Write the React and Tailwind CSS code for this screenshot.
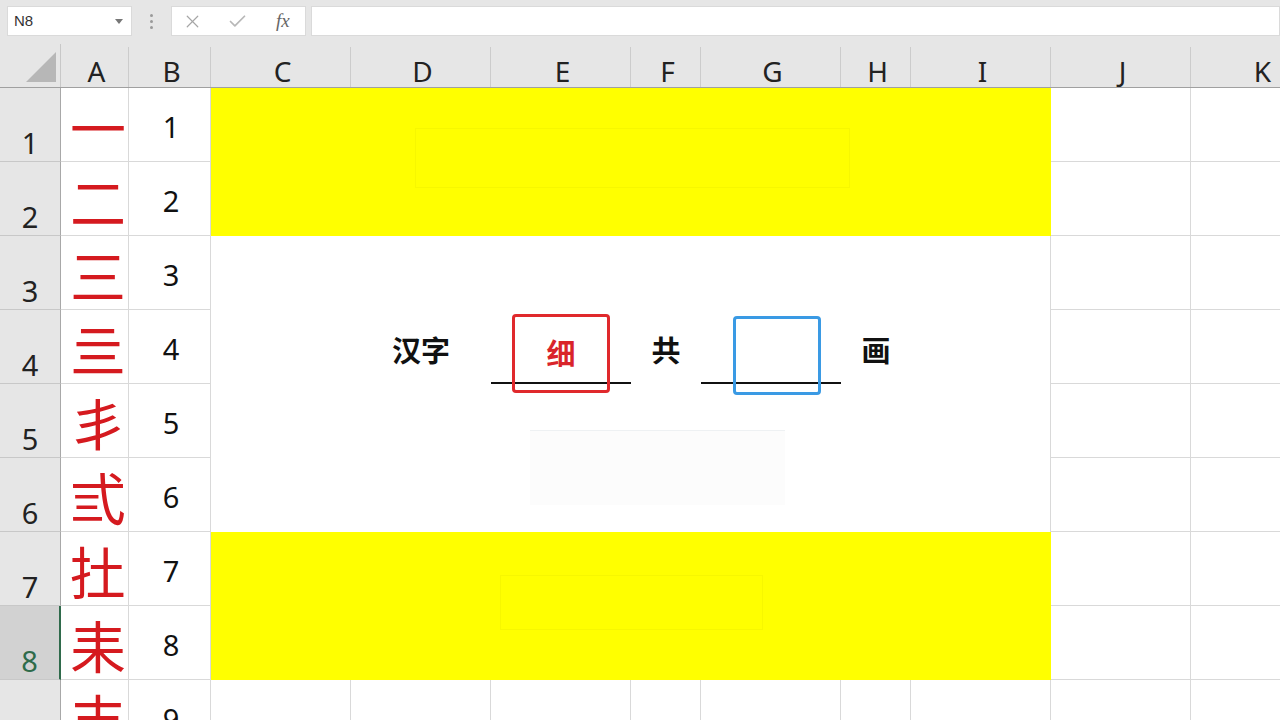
import { X, Check } from "lucide-react";

const cols = ["A", "B", "C", "D", "E", "F", "G", "H", "I", "J", "K"];
const numerals = ["一", "二", "三", "亖", "丯", "弎", "扗", "耒", "丰"];
const grid = "grid grid-cols-[61px_68px_82px_140px_140px_140px_70px_140px_70px_140px_140px_140px]";
const cjk = { fontFamily: '"Noto Sans CJK SC", "Noto Sans", sans-serif' };

function Toolbar() {
    return (
        <div className="h-[44px] bg-[#e6e6e6] flex items-start pt-[6px] pl-[7px] gap-0">
            <div className="w-[125px] h-[30px] bg-white flex items-center justify-between px-[6px] border border-[#dadada]">
                <span className="text-[15px] text-[#333]" style={{ fontFamily: '"Liberation Sans", sans-serif' }}>
                    N8
                </span>
                <span className="w-0 h-0 border-l-[4px] border-r-[4px] border-t-[5px] border-l-transparent border-r-transparent border-t-[#777] mr-[2px]" />
            </div>
            <div className="w-[39px] h-[30px] flex flex-col items-center justify-center gap-[3px]">
                <span className="w-[3px] h-[3px] rounded-full bg-[#9a9a9a]" />
                <span className="w-[3px] h-[3px] rounded-full bg-[#9a9a9a]" />
                <span className="w-[3px] h-[3px] rounded-full bg-[#9a9a9a]" />
            </div>
            <div className="w-[135px] h-[30px] bg-white border border-[#dadada] flex items-center pl-[10px]">
                <X size={21} strokeWidth={1.4} className="text-[#a6a6a6]" />
                <Check size={21} strokeWidth={2} className="text-[#b8b8b8] ml-[24px]" />
                <span className="text-[19px] italic text-[#666] ml-[28px]" style={{ fontFamily: '"Liberation Serif", serif' }}>
                    fx
                </span>
            </div>
            <div className="ml-[5px] flex-1 h-[30px] bg-white border border-[#dadada]" />
        </div>
    );
}

function HeaderRow() {
    return (
        <div className={`${grid} h-[44px] bg-[#e6e6e6] border-b border-[#a0a0a0]`}>
            <div className="flex items-end justify-end pr-[3px] pb-[4px] border-r border-[#c8c8c8]">
                <svg width="32" height="32" viewBox="0 0 32 32">
                    <polygon points="1,31 31,31 31,1" fill="#b7b7b7" />
                </svg>
            </div>
            {cols.map((c) => (
                <div key={c} className="flex items-end justify-center">
                    <div className="flex-1 flex items-center justify-center h-[40px] pt-[7px] pl-[4px] leading-none border-r border-[#cccccc] text-[28px] text-[#222]" style={{ fontFamily: '"Noto Sans", sans-serif' }}>
                        {c}
                    </div>
                </div>
            ))}
        </div>
    );
}

function Body() {
    return (
        <div className={`${grid} grid-rows-[repeat(9,74px)]`}>
            {numerals.map((ch, i) => {
                const r = i + 1;
                const sel = r === 8;
                return [
                    <div
                        key={`h${r}`}
                        className={`flex items-end justify-center pb-[4px] leading-none border-b border-[#c8c8c8] text-[29px] ${
                            sel ? "bg-[#d2d2d2] text-[#2e6b4a] border-r-2 border-r-[#2f6a4b]" : "bg-[#e6e6e6] text-[#222] border-r border-r-[#a8a8a8]"
                        }`}
                        style={{ gridColumn: 1, gridRow: r, fontFamily: '"Noto Sans", sans-serif' }}
                    >
                        {r}
                    </div>,
                    <div
                        key={`a${r}`}
                        className="flex items-center justify-center pl-[7px] pt-[2px] border-r border-b border-[#d9d9d9] text-[56px] text-[#d51a1f] leading-none"
                        style={{ gridColumn: 2, gridRow: r, ...cjk }}
                    >
                        {ch}
                    </div>,
                    <div
                        key={`b${r}`}
                        className="flex items-center justify-center pt-[5px] pl-[3px] border-r border-b border-[#d9d9d9] text-[29px] text-[#111]"
                        style={{ gridColumn: 3, gridRow: r, fontFamily: '"Noto Sans", sans-serif' }}
                    >
                        {r}
                    </div>,
                    <div key={`j${r}`} className="border-r border-b border-[#d9d9d9]" style={{ gridColumn: 11, gridRow: r }} />,
                    <div key={`k${r}`} className="border-r border-b border-[#d9d9d9]" style={{ gridColumn: 12, gridRow: r }} />,
                ];
            })}

            <div className="col-start-4 col-span-7 row-start-1 row-span-2 bg-[#ffff00] pt-[40px] pl-[204px]">
                <div className="w-[435px] h-[60px] border border-[#f7f700]" />
            </div>

            <div className="col-start-4 col-span-7 row-start-3 row-span-4 bg-white border-r border-[#d9d9d9]">
                <div className="grid grid-cols-[140px_140px_140px_70px_140px_70px_140px] mt-[78px] h-[81px]" style={cjk}>
                    <div />
                    <div className="flex justify-center pt-[14px] text-[29px] font-bold text-[#111]">汉字</div>
                    <div className="relative">
                        <div className="absolute left-0 right-0 top-[68px] h-[2px] bg-[#111]" />
                        <div className="absolute left-[21px] top-0 w-[98px] h-[79px] border-[3px] border-[#e0292c] rounded-[4px] flex items-center justify-center pb-[2px] text-[29px] font-bold text-[#d9242a]">
                            细
                        </div>
                    </div>
                    <div className="flex justify-center pt-[14px] text-[29px] font-bold text-[#111]">共</div>
                    <div className="relative">
                        <div className="absolute left-0 right-0 top-[68px] h-[2px] bg-[#111]" />
                        <div className="absolute left-[32px] top-[2px] w-[88px] h-[79px] border-[3px] border-[#3a9ae4] rounded-[4px]" />
                    </div>
                    <div className="flex justify-center pt-[14px] text-[29px] font-bold text-[#111]">画</div>
                    <div />
                </div>
                <div className="ml-[319px] mt-[35px] w-[255px] h-[75px] bg-[#fcfcfc] border-t border-[#eef1f3]" />
            </div>

            <div className="col-start-4 col-span-7 row-start-7 row-span-2 bg-[#ffff00] pt-[43px] pl-[289px]">
                <div className="w-[263px] h-[55px] border border-[#f7f700]" />
            </div>

            {[4, 5, 6, 7, 8, 9, 10].map((c) => (
                <div key={`r9c${c}`} className="border-r border-b border-[#d9d9d9]" style={{ gridColumn: c, gridRow: 9 }} />
            ))}
        </div>
    );
}

export default function App() {
    return (
        <div className="w-[1280px] h-[720px] overflow-hidden bg-white">
            <Toolbar />
            <HeaderRow />
            <Body />
        </div>
    );
}
